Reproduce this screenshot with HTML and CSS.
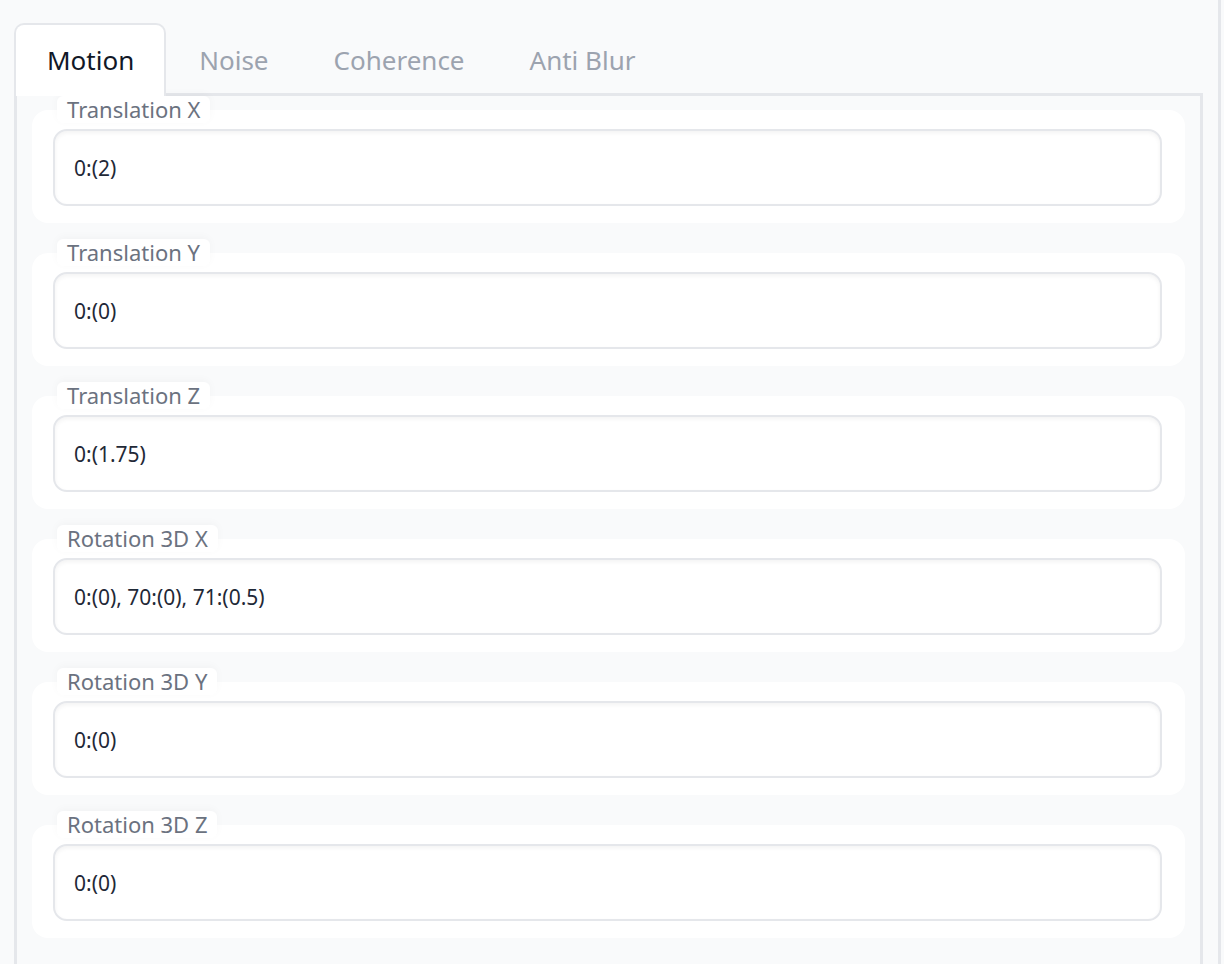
FILE: index.html
```html
<!DOCTYPE html>
<html>
<head>
    <meta charset="utf-8" />
    <title>Motion</title>
    <link rel="stylesheet" href="styles.css">
</head>
<body>
    <div class="frame">
        <div class="tabs">
            <span class="t on">Motion</span><span class="t">Noise</span><span class="t">Coherence</span><span class="t">Anti Blur</span>
        </div>
        <div class="panel">
            <div class="blk">
                <span class="lbl">Translation X</span>
                <input class="txt" type="text" value="0:(2)" />
            </div>
            <div class="blk">
                <span class="lbl">Translation Y</span>
                <input class="txt" type="text" value="0:(0)" />
            </div>
            <div class="blk">
                <span class="lbl">Translation Z</span>
                <input class="txt" type="text" value="0:(1.75)" />
            </div>
            <div class="blk">
                <span class="lbl">Rotation 3D X</span>
                <input class="txt" type="text" value="0:(0), 70:(0), 71:(0.5)" />
            </div>
            <div class="blk">
                <span class="lbl">Rotation 3D Y</span>
                <input class="txt" type="text" value="0:(0)" />
            </div>
            <div class="blk">
                <span class="lbl">Rotation 3D Z</span>
                <input class="txt" type="text" value="0:(0)" />
            </div>
        </div>
    </div>
</body>
</html>
```

FILE: styles.css
```css
body { margin: 0; background: #f9fafb; font-family: "Noto Sans", "Liberation Sans", sans-serif; }
.frame { width: 1221px; min-height: 964px; box-sizing: border-box; border-right: 3px solid #e5e7eb; padding: 23px 15px 0 14px; }
.tabs { display: flex; position: relative; z-index: 1; }
.tabs span.t { display: inline-block; height: 68px; line-height: 70px; padding: 0 30px 0 31px; font-size: 26px; color: #9ca3af; border: 2px solid transparent; border-bottom: none; cursor: pointer; }
.tabs span.t.on { background: white; color: #111827; border-color: #e5e7eb; border-radius: 10px 10px 0 0; margin-bottom: -3px; height: 71px; }
.panel { border: 3px solid #e5e7eb; border-bottom: none; padding: 14px 15px 30px 15px; display: flex; flex-direction: column; gap: 30px; min-height: 820px; box-sizing: border-box; }
.blk { position: relative; background: white; border-radius: 16px; padding: 19px 23px 17px 21px; }
.lbl { position: absolute; top: -14px; left: 25px; height: 27px; line-height: 26px; padding: 0 10px; font-size: 22px; color: #6b7280; background: white; border-radius: 6px; box-shadow: 0 -2px 8px rgba(0, 0, 0, 0.03); }
.txt { display: block; width: 100%; height: 77px; box-sizing: border-box; border: 2px solid #e5e7eb; border-radius: 14px; padding: 0 19px; font-family: "Noto Sans", "Liberation Sans", sans-serif; font-size: 21px; color: #1f2937; background: white; box-shadow: inset 0 2px 4px rgba(0, 0, 0, 0.05); outline: none; }
```
